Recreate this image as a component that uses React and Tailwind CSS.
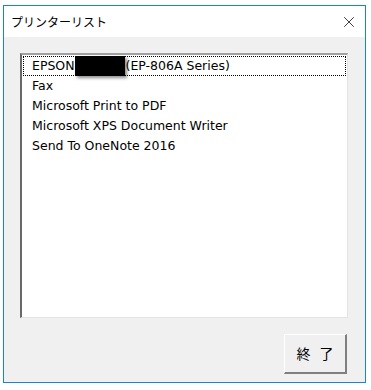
import { X } from 'lucide-react'

const ITEMS = ['Fax', 'Microsoft Print to PDF', 'Microsoft XPS Document Writer', 'Send To OneNote 2016']

export default function App() {
  return (
    <div className="w-[371px] h-[390px] bg-white pt-[5px] pl-[3px]">
      <div className="w-[363px] h-[378px] border border-[#1883d7] flex flex-col bg-[#f0f0f0]" style={{ fontFamily: '"DejaVu Sans", "Noto Sans CJK JP", sans-serif' }}>
        <div className="h-[31px] bg-white flex items-center justify-between pl-[7px] pr-[7px] shrink-0">
          <span className="text-[12px] text-black" style={{ fontFamily: '"Noto Sans CJK JP", sans-serif' }}>プリンターリスト</span>
          <X size={18} strokeWidth={1} className="text-black" />
        </div>
        <div className="flex-1 flex flex-col pt-[16px] pl-[16px] pr-[17px]">
          <div className="h-[265px] bg-white border-t-2 border-l-2 border-t-[#a0a0a0] border-l-[#696969] border-b border-r border-b-[#e3e3e3] border-r-[#e3e3e3] pt-[1px]">
            <div className="h-[20px] mx-[1px] border border-dotted border-black flex items-center pl-[8px] text-[12.5px] text-black">
              <span>EPSON</span>
              <span className="inline-block w-[50px] h-[20px] bg-black shadow-[2px_2px_3px_rgba(0,0,0,0.45)]"></span>
              <span className="ml-[1px]">(EP-806A Series)</span>
            </div>
            {ITEMS.map(t => (
              <div key={t} className="h-[20px] flex items-center pl-[10px] text-[12.5px] text-black">{t}</div>
            ))}
          </div>
          <div className="flex justify-end mt-[16px] pr-[1px]">
            <button className="w-[63px] h-[40px] bg-[#f0f0f0] border-t border-l border-t-white border-l-white border-b-2 border-r-2 border-b-[#808080] border-r-[#808080] text-[14px] text-black flex items-center justify-center tracking-[9px] pl-[9px]" style={{ fontFamily: '"Noto Sans CJK JP", sans-serif' }}>
              終了
            </button>
          </div>
        </div>
      </div>
    </div>
  )
}
